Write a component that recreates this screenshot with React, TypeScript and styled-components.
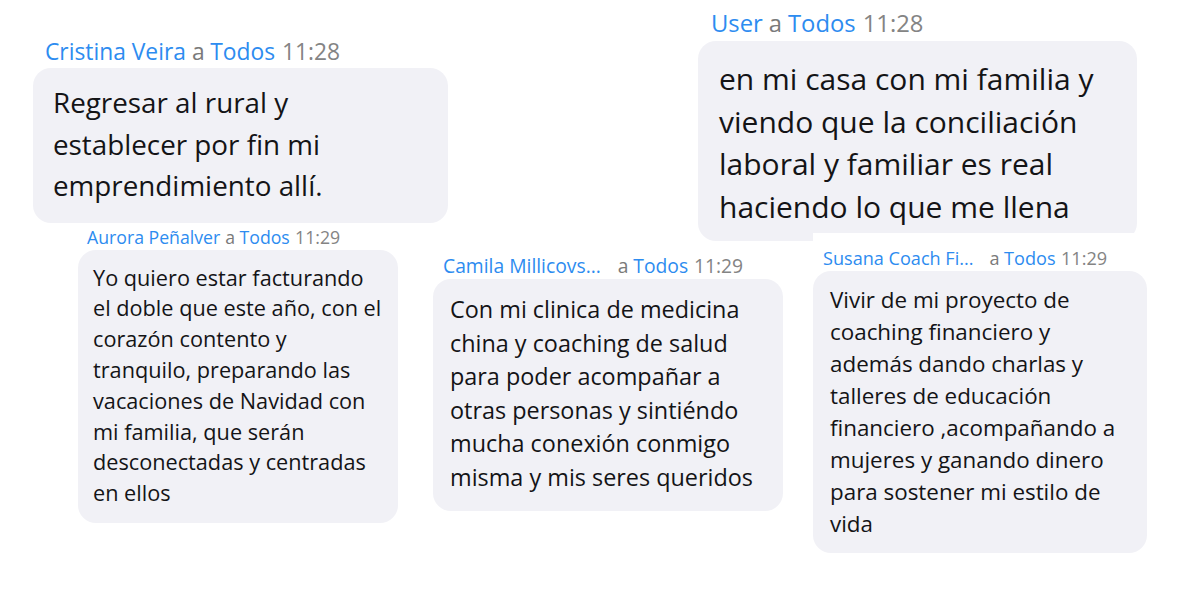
import styled, { createGlobalStyle } from 'styled-components';

const GlobalStyle = createGlobalStyle`
    html, body {
        margin: 0;
        padding: 0;
        background: #ffffff;
    }
    body {
        font-family: "Open Sans", "Noto Sans", sans-serif;
        -webkit-font-smoothing: antialiased;
    }
`;

const Canvas = styled.div`
    position: relative;
    width: 1200px;
    height: 600px;
    overflow: hidden;
    background: #ffffff;
`;

// each snippet is a cropped chat capture pasted on the canvas
const Snippet = styled.div<{ $x: number; $y: number; $pad: number }>`
    position: absolute;
    left: ${(p) => p.$x}px;
    top: ${(p) => p.$y}px;
    padding-top: ${(p) => p.$pad}px;
    background: #ffffff;
    display: flex;
    flex-direction: column;
`;

const Header = styled.div<{ $size: number; $indent: number; $gap: number }>`
    display: flex;
    align-items: baseline;
    font-size: ${(p) => p.$size}px;
    line-height: ${(p) => Math.round(p.$size * 1.3)}px;
    padding-left: ${(p) => p.$indent}px;
    margin-bottom: ${(p) => p.$gap}px;
    white-space: nowrap;
`;

const Name = styled.span<{ $space: number }>`
    color: #2d8cf0;
    margin-right: ${(p) => p.$space}px;
`;

const To = styled.span`
    color: #7a7a7a;
    margin-right: 0.25em;
`;

const Everyone = styled.span`
    color: #2d8cf0;
    margin-right: 0.3em;
`;

const Time = styled.span`
    color: #848484;
`;

const Bubble = styled.div<{ $w: number; $size: number; $lh: number; $pt: number; $pb: number; $px: number }>`
    width: ${(p) => p.$w}px;
    box-sizing: border-box;
    background: #f1f1f6;
    border-radius: 18px;
    padding: ${(p) => `${p.$pt}px ${p.$px}px ${p.$pb}px`};
    color: #141416;
    font-size: ${(p) => p.$size}px;
    line-height: ${(p) => p.$lh}px;
`;

const Line = styled.div`
    white-space: nowrap;
`;

interface MessageType {
    x: number,
    y: number,
    pad: number,
    name: string,
    nameSpace: number,
    time: string,
    headerSize: number,
    indent: number,
    gap: number,
    width: number,
    size: number,
    lh: number,
    pt: number,
    pb: number,
    px: number,
    lines: string[],
}

const messages: MessageType[] = [
    {
        x: 33, y: 28, pad: 9, name: 'Cristina Veira', nameSpace: 6, time: '11:28',
        headerSize: 22.8, indent: 12, gap: 1, width: 415, size: 27.8, lh: 41.5, pt: 14, pb: 16, px: 20,
        lines: ['Regresar al rural y', 'establecer por fin mi', 'emprendimiento allí.'],
    },
    {
        x: 698, y: 0, pad: 8, name: 'User', nameSpace: 6, time: '11:28',
        headerSize: 23.8, indent: 13, gap: 2, width: 439, size: 30, lh: 42.7, pt: 17, pb: 12, px: 21,
        lines: ['en mi casa con mi familia y', 'viendo que la conciliación', 'laboral y familiar es real', 'haciendo lo que me llena'],
    },
    {
        x: 78, y: 226, pad: 0, name: 'Aurora Peñalver', nameSpace: 5, time: '11:29',
        headerSize: 17.7, indent: 9, gap: 1, width: 320, size: 21.7, lh: 30.8, pt: 12.6, pb: 13.6, px: 15,
        lines: [
            'Yo quiero estar facturando',
            'el doble que este año, con el',
            'corazón contento y',
            'tranquilo, preparando las',
            'vacaciones de Navidad con',
            'mi familia, que serán',
            'desconectadas y centradas',
            'en ellos',
        ],
    },
    {
        x: 433, y: 253, pad: 0, name: 'Camila Millicovs...', nameSpace: 17, time: '11:29',
        headerSize: 19.3, indent: 10, gap: 1, width: 350, size: 23.4, lh: 33.6, pt: 14, pb: 16, px: 17,
        lines: [
            'Con mi clinica de medicina',
            'china y coaching de salud',
            'para poder acompañar a',
            'otras personas y sintiéndo',
            'mucha conexión conmigo',
            'misma y mis seres queridos',
        ],
    },
    {
        x: 813, y: 233, pad: 13, name: 'Susana Coach Fi...', nameSpace: 16, time: '11:29',
        headerSize: 18.1, indent: 10, gap: 1, width: 334, size: 22.4, lh: 32, pt: 13, pb: 13, px: 17,
        lines: [
            'Vivir de mi proyecto de',
            'coaching financiero y',
            'además dando charlas y',
            'talleres de educación',
            'financiero ,acompañando a',
            'mujeres y ganando dinero',
            'para sostener mi estilo de',
            'vida',
        ],
    },
];

const App = () => {
  return (
    <>
        <GlobalStyle />
        <Canvas>
            {messages.map((m) => (
                <Snippet key={m.name} $x={m.x} $y={m.y} $pad={m.pad}>
                    <Header $size={m.headerSize} $indent={m.indent} $gap={m.gap}>
                        <Name $space={m.nameSpace}>{m.name}</Name>
                        <To>a</To>
                        <Everyone>Todos</Everyone>
                        <Time>{m.time}</Time>
                    </Header>
                    <Bubble $w={m.width} $size={m.size} $lh={m.lh} $pt={m.pt} $pb={m.pb} $px={m.px}>
                        {m.lines.map((l) => <Line key={l}>{l}</Line>)}
                    </Bubble>
                </Snippet>
            ))}
        </Canvas>
    </>
  )
}

export default App;
